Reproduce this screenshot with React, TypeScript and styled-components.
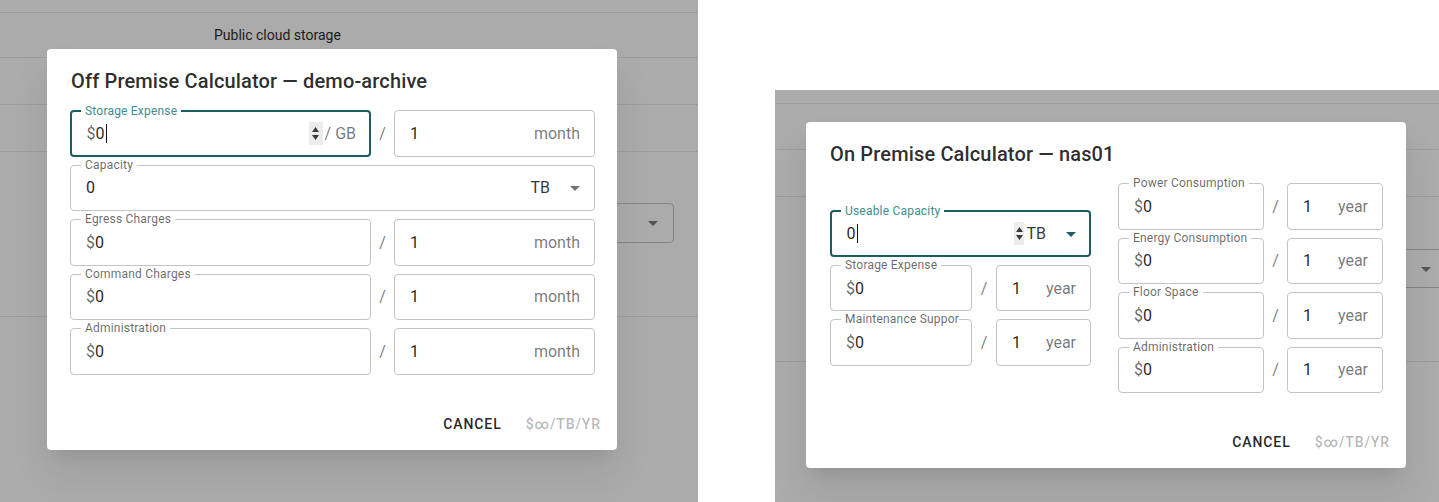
import React from "react";
import styled, { createGlobalStyle, css } from "styled-components";

const GlobalStyle = createGlobalStyle`
  body {
    margin: 0;
    font-family: Roboto, "Noto Sans", Arial, sans-serif;
    background: #ffffff;
  }
`;

const TEAL = "#1b5e62";
const TEAL_LABEL = "#3f8d90";

const Screen = styled.div`
  display: flex;
  align-items: flex-start;
  width: 1439px;
  height: 502px;
  overflow: hidden;
  background: #ffffff;
`;

const Backdrop = styled.div<{ $width?: number; $height: number; $top?: number; $left?: number }>`
  position: relative;
  flex: ${(p) => (p.$width ? "none" : "1")};
  width: ${(p) => (p.$width ? `${p.$width}px` : "auto")};
  height: ${(p) => p.$height}px;
  margin-top: ${(p) => p.$top ?? 0}px;
  margin-left: ${(p) => p.$left ?? 0}px;
  background: #ababab;
  overflow: hidden;
`;

const BgRow = styled.div<{ $height: number }>`
  height: ${(p) => p.$height}px;
  border-bottom: 1px solid #9c9c9c;
  box-sizing: border-box;
  display: flex;
  align-items: center;
`;

const BgText = styled.div<{ $left: number }>`
  margin-left: ${(p) => p.$left}px;
  font-size: 14px;
  color: #1c1c1c;
`;

const BgSelect = styled.div<{ $left: number; $width: number; $height: number; $top: number; $end?: boolean }>`
  align-self: flex-start;
  margin-top: ${(p) => p.$top}px;
  margin-left: ${(p) => p.$left}px;
  width: ${(p) => p.$width}px;
  height: ${(p) => p.$height}px;
  flex: none;
  box-sizing: border-box;
  border: 1px solid #848484;
  border-radius: 4px;
  display: flex;
  align-items: center;
  justify-content: ${(p) => (p.$end ? "flex-start" : "space-between")};
  padding: 0 8px 0 ${(p) => (p.$end ? 0 : 16)}px;
  font-size: 16px;
  color: #1c1c1c;
`;

const Dialog = styled.div<{ $top: number; $left: number; $width: number }>`
  position: absolute;
  top: ${(p) => p.$top}px;
  left: ${(p) => p.$left}px;
  width: ${(p) => p.$width}px;
  background: #ffffff;
  border-radius: 4px;
  box-shadow: 0 11px 15px -7px rgba(0, 0, 0, 0.1), 0 24px 38px 3px rgba(0, 0, 0, 0.06);
`;

const DialogTitle = styled.h2`
  margin: 0;
  padding: 16px 24px 0;
  font-size: 20px;
  font-weight: 500;
  line-height: 32px;
  letter-spacing: 0.15px;
  color: rgba(0, 0, 0, 0.84);
`;

const DialogContent = styled.div<{ $pl: number; $pr: number }>`
  padding: 13px ${(p) => p.$pr}px 23px ${(p) => p.$pl}px;
`;

const Stack = styled.div<{ $width?: number }>`
  display: flex;
  flex-direction: column;
  gap: 8px;
  width: ${(p) => (p.$width ? `${p.$width}px` : "auto")};
  flex: none;
`;

const Columns = styled.div`
  display: flex;
  align-items: center;
  gap: 27px;
`;

const Row = styled.div`
  display: flex;
  align-items: center;
`;

const Slash = styled.div<{ $width: number }>`
  width: ${(p) => p.$width}px;
  flex: none;
  text-align: center;
  font-size: 16px;
  color: rgba(0, 0, 0, 0.54);
`;

const Field = styled.div<{ $width?: number; $focused?: boolean; $pr?: number }>`
  position: relative;
  box-sizing: border-box;
  width: ${(p) => (p.$width ? `${p.$width}px` : "100%")};
  flex: none;
  height: 46.5px;
  border-radius: 4px;
  display: flex;
  align-items: center;
  font-size: 16px;
  color: rgba(0, 0, 0, 0.87);
  ${(p) =>
    p.$focused
      ? css`
          border: 2px solid ${TEAL};
          padding: 0 ${(p.$pr ?? 14) - 1}px 0 14.5px;
        `
      : css`
          border: 1px solid #c4c4c4;
          padding: 0 ${p.$pr ?? 14}px 0 15px;
        `}
`;

const FieldLabel = styled.span<{ $focused?: boolean }>`
  position: absolute;
  top: -9px;
  left: ${(p) => (p.$focused ? 9 : 10)}px;
  max-width: calc(100% - 30px);
  padding: 0 4px;
  background: #ffffff;
  font-size: 12px;
  line-height: 16px;
  letter-spacing: 0.2px;
  white-space: nowrap;
  overflow: hidden;
  color: ${(p) => (p.$focused ? TEAL_LABEL : "rgba(0, 0, 0, 0.6)")};
`;

const Value = styled.span`
  flex: 1;
  display: flex;
  align-items: center;
  white-space: nowrap;
`;

const Dollar = styled.span`
  color: rgba(0, 0, 0, 0.62);
`;

const Caret = styled.span`
  display: inline-block;
  width: 1px;
  height: 19px;
  margin-left: 1px;
  background: #111;
`;

const Unit = styled.span<{ $dark?: boolean }>`
  white-space: nowrap;
  color: ${(p) => (p.$dark ? "rgba(0, 0, 0, 0.8)" : "rgba(0, 0, 0, 0.54)")};
`;

const SpinBox = styled.span<{ $width: number }>`
  width: ${(p) => p.$width}px;
  height: 23px;
  flex: none;
  background: #ececec;
  display: flex;
  flex-direction: column;
  align-items: center;
  justify-content: center;
  gap: 3px;
  margin-right: 2px;
`;

const DropIcon = styled.svg<{ $color: string; $gap: number }>`
  width: 24px;
  height: 24px;
  flex: none;
  margin-left: ${(p) => p.$gap}px;
  fill: ${(p) => p.$color};
`;

const Actions = styled.div`
  display: flex;
  justify-content: flex-end;
  align-items: center;
  padding: 8px;
`;

const TextButton = styled.button<{ $disabled?: boolean }>`
  margin-left: 8px;
  padding: 6px 8px;
  border: none;
  background: transparent;
  font-family: Roboto, "Noto Sans", Arial, sans-serif;
  font-size: 14px;
  font-weight: 500;
  line-height: 24px;
  letter-spacing: 0.9px;
  text-transform: uppercase;
  color: ${(p) => (p.$disabled ? "rgba(0, 0, 0, 0.3)" : "rgba(0, 0, 0, 0.87)")};
  cursor: ${(p) => (p.$disabled ? "default" : "pointer")};
`;

const Spinner = ({ width }: { width: number }) => (
  <SpinBox $width={width}>
    <svg width="7" height="5" viewBox="0 0 7 5">
      <path d="M0 5 L3.5 0 L7 5 Z" fill="#3a3a3a" />
    </svg>
    <svg width="7" height="5" viewBox="0 0 7 5">
      <path d="M0 0 L3.5 5 L7 0 Z" fill="#3a3a3a" />
    </svg>
  </SpinBox>
);

const ArrowDrop = ({ color, gap }: { color: string; gap: number }) => (
  <DropIcon viewBox="0 0 24 24" $color={color} $gap={gap}>
    <path d="M7 10l5 5 5-5z" />
  </DropIcon>
);

type RateProps = {
  label: string;
  period: string;
  fieldWidth: number;
  slashWidth: number;
  periodWidth: number;
};

const RateRow = ({ label, period, fieldWidth, slashWidth, periodWidth }: RateProps) => (
  <Row>
    <Field $width={fieldWidth}>
      <FieldLabel>{label}</FieldLabel>
      <Value>
        <Dollar>$</Dollar>0
      </Value>
    </Field>
    <Slash $width={slashWidth}>/</Slash>
    <Field $width={periodWidth}>
      <Value>1</Value>
      <Unit>{period}</Unit>
    </Field>
  </Row>
);

const OffPremise = () => (
  <Dialog $top={49} $left={47} $width={570}>
    <DialogTitle>Off Premise Calculator — demo-archive</DialogTitle>
    <DialogContent $pl={23} $pr={22}>
      <Stack>
        <Row>
          <Field $width={301} $focused>
            <FieldLabel $focused>Storage Expense</FieldLabel>
            <Value>
              <Dollar>$</Dollar>0
              <Caret />
            </Value>
            <Spinner width={14} />
            <Unit>/ GB</Unit>
          </Field>
          <Slash $width={23}>/</Slash>
          <Field $width={201}>
            <Value>1</Value>
            <Unit>month</Unit>
          </Field>
        </Row>
        <Field $pr={7}>
          <FieldLabel>Capacity</FieldLabel>
          <Value>0</Value>
          <Unit $dark>TB</Unit>
          <ArrowDrop color="rgba(0,0,0,0.54)" gap={13} />
        </Field>
        <RateRow label="Egress Charges" period="month" fieldWidth={301} slashWidth={23} periodWidth={201} />
        <RateRow label="Command Charges" period="month" fieldWidth={301} slashWidth={23} periodWidth={201} />
        <RateRow label="Administration" period="month" fieldWidth={301} slashWidth={23} periodWidth={201} />
      </Stack>
    </DialogContent>
    <Actions>
      <TextButton>Cancel</TextButton>
      <TextButton $disabled>$∞/TB/YR</TextButton>
    </Actions>
  </Dialog>
);

const OnPremise = () => (
  <Dialog $top={32} $left={31} $width={600}>
    <DialogTitle>On Premise Calculator — nas01</DialogTitle>
    <DialogContent $pl={24} $pr={23}>
      <Columns>
        <Stack $width={261}>
          <Field $focused $pr={7}>
            <FieldLabel $focused>Useable Capacity</FieldLabel>
            <Value>
              0
              <Caret />
            </Value>
            <Spinner width={10} />
            <Unit $dark>TB</Unit>
            <ArrowDrop color={TEAL} gap={13} />
          </Field>
          <RateRow label="Storage Expense" period="year" fieldWidth={142} slashWidth={24} periodWidth={95} />
          <RateRow label="Maintenance Support" period="year" fieldWidth={142} slashWidth={24} periodWidth={95} />
        </Stack>
        <Stack $width={265}>
          <RateRow label="Power Consumption" period="year" fieldWidth={146} slashWidth={23} periodWidth={96} />
          <RateRow label="Energy Consumption" period="year" fieldWidth={146} slashWidth={23} periodWidth={96} />
          <RateRow label="Floor Space" period="year" fieldWidth={146} slashWidth={23} periodWidth={96} />
          <RateRow label="Administration" period="year" fieldWidth={146} slashWidth={23} periodWidth={96} />
        </Stack>
      </Columns>
    </DialogContent>
    <Actions>
      <TextButton>Cancel</TextButton>
      <TextButton $disabled>$∞/TB/YR</TextButton>
    </Actions>
  </Dialog>
);

export default function App() {
  return (
    <>
      <GlobalStyle />
      <Screen>
        <Backdrop $width={698} $height={502}>
          <BgRow $height={13} />
          <BgRow $height={45}>
            <BgText $left={214}>Public cloud storage</BgText>
          </BgRow>
          <BgRow $height={47} />
          <BgRow $height={47} />
          <BgRow $height={165}>
            <BgSelect $left={540} $width={134} $height={40} $top={51}>
              <span>0</span>
              <ArrowDrop color="#555" gap={0} />
            </BgSelect>
          </BgRow>
          <OffPremise />
        </Backdrop>
        <Backdrop $height={412} $top={90} $left={77}>
          <BgRow $height={14} />
          <BgRow $height={46} />
          <BgRow $height={47} />
          <BgRow $height={165}>
            <BgSelect $left={560} $width={140} $height={39} $top={52} $end>
              <span style={{ width: 78 }} />
              <ArrowDrop color="#555" gap={0} />
            </BgSelect>
          </BgRow>
          <OnPremise />
        </Backdrop>
      </Screen>
    </>
  );
}
